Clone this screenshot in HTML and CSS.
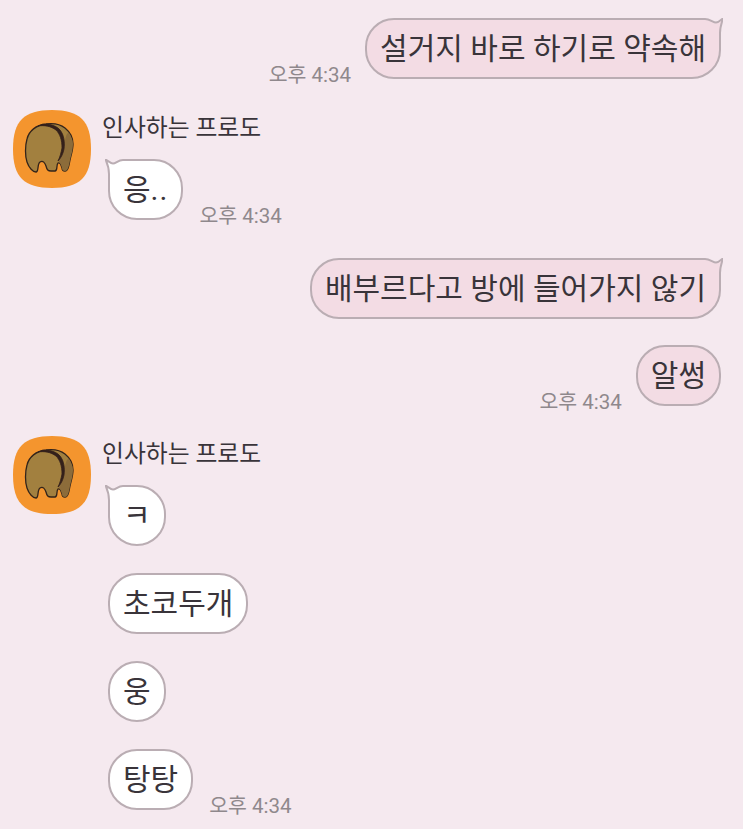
FILE: index.html
```html
<!DOCTYPE html>
<html>
	<head>
		<meta charset="utf-8" />
		<meta name="viewport" content="width=device-width, initial-scale=1">
		<title>대화</title>
		<link rel="stylesheet" href="styles.css">
	</head>
	<body>
		<div class="chat">
			<div class="row me first">
				<span class="time">오후 4:34</span>
				<div class="bubble pink">
					설거지 바로 하기로 약속해
					<svg class="tail tail-r" width="32" height="30" viewBox="0 0 32 30"><use href="#tail-pink"/></svg>
				</div>
			</div>

			<div class="group">
				<svg class="avatar" width="78" height="78" viewBox="0 0 78 78"><use href="#bear"/></svg>
				<div class="col">
					<div class="name">인사하는 프로도</div>
					<div class="row">
						<div class="bubble white">
							응<span class="dots">..</span>
							<svg class="tail tail-l" width="32" height="30" viewBox="0 0 32 30"><use href="#tail-white"/></svg>
						</div>
						<span class="time">오후 4:34</span>
					</div>
				</div>
			</div>

			<div class="row me third">
				<div class="bubble pink">
					배부르다고 방에 들어가지 않기
					<svg class="tail tail-r" width="32" height="30" viewBox="0 0 32 30"><use href="#tail-pink"/></svg>
				</div>
			</div>
			<div class="row me fourth">
				<span class="time">오후 4:34</span>
				<div class="bubble pink">알썽</div>
			</div>

			<div class="group second">
				<svg class="avatar" width="78" height="78" viewBox="0 0 78 78"><use href="#bear"/></svg>
				<div class="col">
					<div class="name">인사하는 프로도</div>
					<div class="row">
						<div class="bubble white">
							ㅋ
							<svg class="tail tail-l" width="32" height="30" viewBox="0 0 32 30"><use href="#tail-white"/></svg>
						</div>
					</div>
					<div class="row next"><div class="bubble white">초코두개</div></div>
					<div class="row next"><div class="bubble white">웅</div></div>
					<div class="row next">
						<div class="bubble white">탕탕</div>
						<span class="time">오후 4:34</span>
					</div>
				</div>
			</div>
		</div>

		<svg width="0" height="0" class="defs">
			<defs>
				<g id="tail-pink">
					<path d="M0 1H14C19 1 22 4.500 25 4.500C28 4.500 30 1.500 32 .5C30.500 5 29 9 29 15V30H0Z" fill="#f3dce4"/>
					<path d="M0 1H14C19 1 22 4.500 25 4.500C28 4.500 30 1.500 32 .5C30.500 5 29 9 29 15V30" fill="none" stroke="#baadb3" stroke-width="2"/>
				</g>
				<g id="tail-white">
					<path d="M32 1H18C13 1 11 4.500 8 4.500C5.500 4.500 3 1.500 .5 .5C2.500 5 4 9 4 15V30H32Z" fill="#fff"/>
					<path d="M32 1H18C13 1 11 4.500 8 4.500C5.500 4.500 3 1.500 .5 .5C2.500 5 4 9 4 15V30" fill="none" stroke="#baadb3" stroke-width="2"/>
				</g>
				<g id="bear">
					<path d="M39 0C67 0 78 11 78 39C78 67 67 78 39 78C11 78 0 67 0 39C0 11 11 0 39 0Z" fill="#f4952e"/>
					<path d="M33 14C23 15 16 21 14 29C12 36 12 46 14 52C16 58 20 62 23 62C26 62 24 54 27 52C30 50 32 53 33 56C34 60 35 61 38 61H42C45 61 43 55 45 53C47 52 48 55 49 58C49 60 50 61 52 61C55 61 56 56 57 50C58 45 60 40 60 34C60 27 57 22 52 18C47 14 40 13 33 14Z" fill="#a2803f" stroke="#33241a" stroke-width="1.300" stroke-linejoin="round"/>
					<path d="M50 42C49 46 47 49 45 51C47 52 48 55 49 58C49 60 50 61 52 61C55 61 56 56 57 50C58 45 60 40 60 34C60 30 58 26 56 23C53 22 52 30 51 36Z" fill="#8c6c3a"/>
					<path d="M25 16C32 13 42 14 47 20C51 25 52 32 51 39C50 44 48 48 45 51C47 47 48 43 49 38C49 30 47 24 43 20C38 16 31 15 25 16Z" fill="#33201a" stroke="#33201a" stroke-width=".8" stroke-linejoin="round"/>
				</g>
			</defs>
		</svg>
	</body>
</html>
```

FILE: styles.css
```css
html,body{
	margin: 0;
	padding: 0;
}
body{
	background: #f5e9ef;
	font-family: "Roboto", "Noto Sans CJK KR", sans-serif;
	overflow: hidden;
}
.defs{
	display: block;
}
.chat{
	height: 829px;
	padding: 18px 22px 0 13px;
	box-sizing: border-box;
}
.row{
	display: flex;
	align-items: flex-end;
}
.me{
	justify-content: flex-end;
}
.third{
	margin-top: 38px;
}
.fourth{
	margin-top: 26px;
}
.bubble{
	position: relative;
	z-index: 0;
	box-sizing: border-box;
	height: 61px;
	line-height: 57px;
	padding: 0 13px;
	font-size: 30px;
	color: #39343a;
	border: 2px solid #baadb3;
	border-radius: 29px;
	white-space: nowrap;
}
.pink{
	background: #f3dce4;
}
.white{
	background: #fff;
}
.dots{
	letter-spacing: 1px;
}
.tail{
	position: absolute;
	top: -2px;
	z-index: -1;
}
.tail-r{
	right: -4px;
}
.tail-l{
	left: -5px;
}
.time{
	font-size: 20.500px;
	line-height: 24px;
	color: #8f888c;
	white-space: nowrap;
}
.me .time{
	margin-right: 14px;
	margin-bottom: -8px;
}
.col .time{
	margin-left: 16px;
	margin-bottom: -8px;
}
.group{
	display: flex;
	margin-top: 31px;
}
.second{
	margin-top: 30px;
}
.avatar{
	flex: none;
}
.col{
	margin-left: 17px;
}
.name{
	margin-left: -6px;
	height: 49px;
	padding-top: 2px;
	box-sizing: border-box;
	font-size: 23.800px;
	line-height: 32px;
	color: #39343a;
}
.next{
	margin-top: 27px;
}
```
